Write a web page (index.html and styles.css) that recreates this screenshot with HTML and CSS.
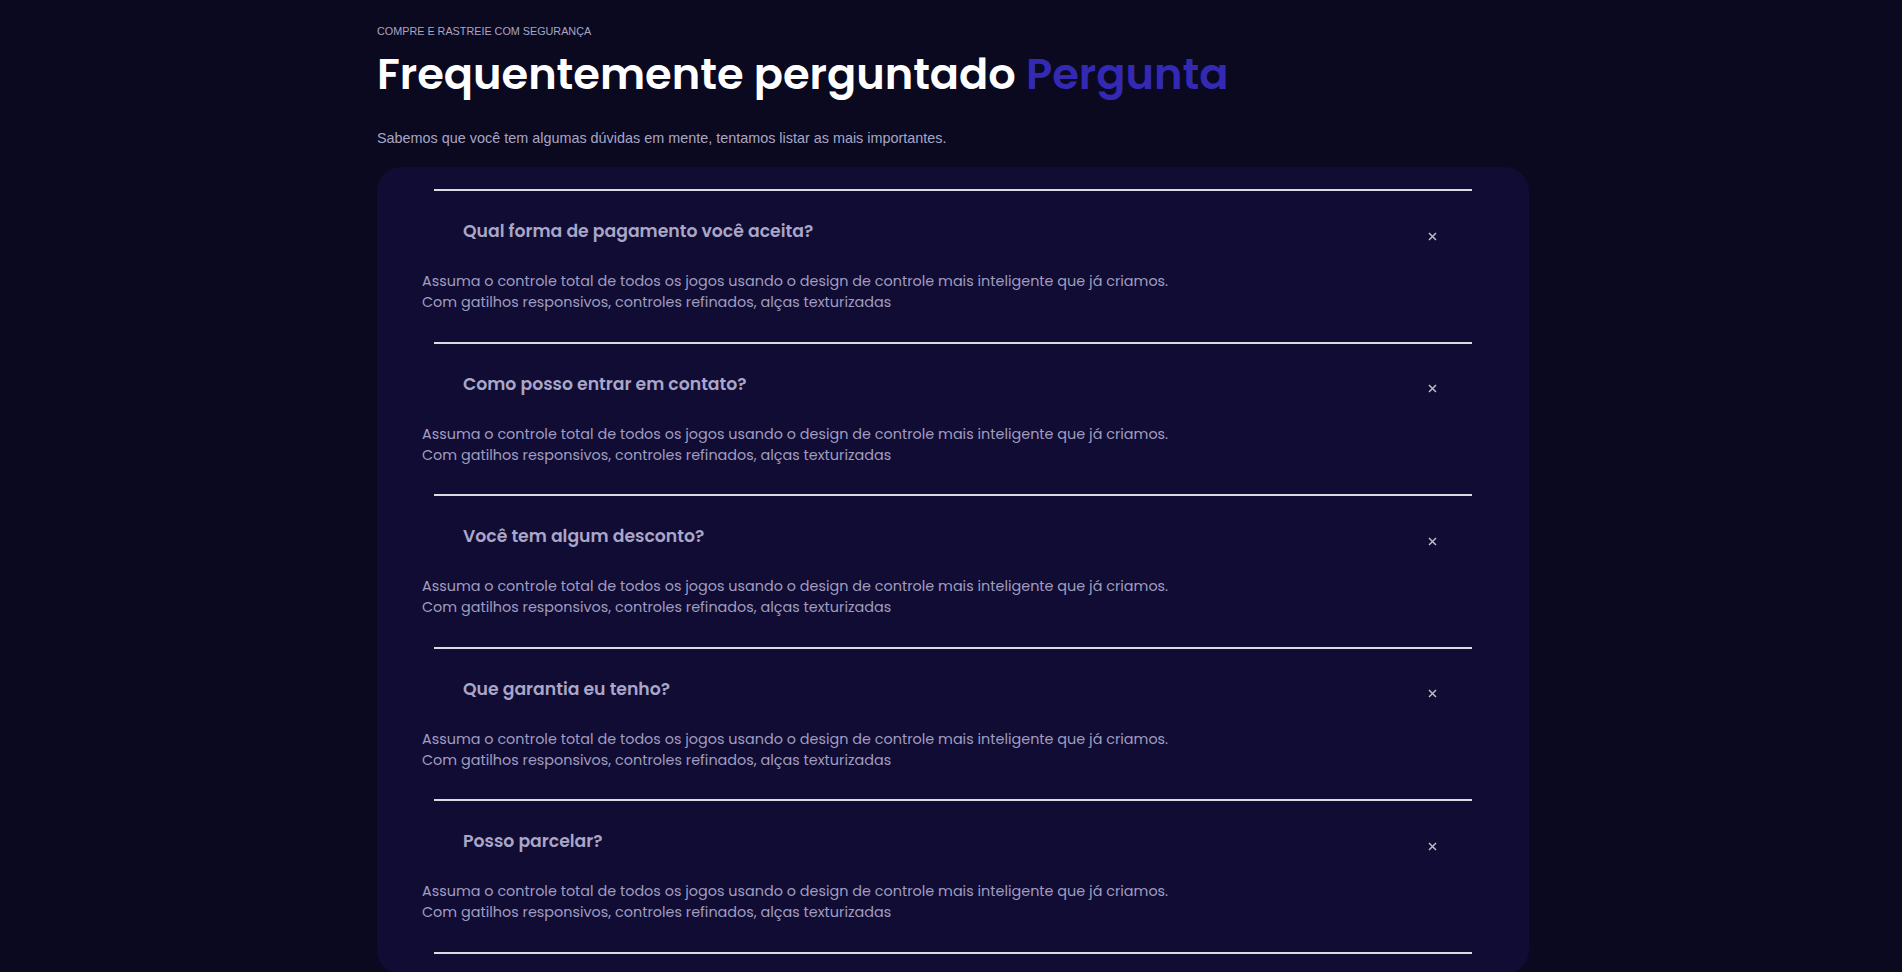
FILE: index.html
```html
<!DOCTYPE html>
<html lang="pt-BR">
<head>
<meta charset="utf-8">
<title>FAQ</title>
<link rel="stylesheet" href="styles.css">
</head>
<body>
<main class="page">
  <p class="eyebrow">COMPRE E RASTREIE COM SEGURANÇA</p>
  <h1 class="title">Frequentemente perguntado <span class="accent">Pergunta</span></h1>
  <p class="lead">Sabemos que você tem algumas dúvidas em mente, tentamos listar as mais importantes.</p>
  <section class="card">
    <div class="item">
      <div class="q-row"><h3 class="question">Qual forma de pagamento você aceita?</h3><svg class="close" width="9" height="9" viewBox="0 0 9 9"><path d="M1 1L8 8M8 1L1 8" stroke="#bdbcc6" stroke-width="1.5" fill="none"/></svg></div>
      <p class="answer">Assuma o controle total de todos os jogos usando o design de controle mais inteligente que já criamos.<br>Com gatilhos responsivos, controles refinados, alças texturizadas</p>
    </div>
    <div class="item">
      <div class="q-row"><h3 class="question">Como posso entrar em contato?</h3><svg class="close" width="9" height="9" viewBox="0 0 9 9"><path d="M1 1L8 8M8 1L1 8" stroke="#bdbcc6" stroke-width="1.5" fill="none"/></svg></div>
      <p class="answer">Assuma o controle total de todos os jogos usando o design de controle mais inteligente que já criamos.<br>Com gatilhos responsivos, controles refinados, alças texturizadas</p>
    </div>
    <div class="item">
      <div class="q-row"><h3 class="question">Você tem algum desconto?</h3><svg class="close" width="9" height="9" viewBox="0 0 9 9"><path d="M1 1L8 8M8 1L1 8" stroke="#bdbcc6" stroke-width="1.5" fill="none"/></svg></div>
      <p class="answer">Assuma o controle total de todos os jogos usando o design de controle mais inteligente que já criamos.<br>Com gatilhos responsivos, controles refinados, alças texturizadas</p>
    </div>
    <div class="item">
      <div class="q-row"><h3 class="question">Que garantia eu tenho?</h3><svg class="close" width="9" height="9" viewBox="0 0 9 9"><path d="M1 1L8 8M8 1L1 8" stroke="#bdbcc6" stroke-width="1.5" fill="none"/></svg></div>
      <p class="answer">Assuma o controle total de todos os jogos usando o design de controle mais inteligente que já criamos.<br>Com gatilhos responsivos, controles refinados, alças texturizadas</p>
    </div>
    <div class="item">
      <div class="q-row"><h3 class="question">Posso parcelar?</h3><svg class="close" width="9" height="9" viewBox="0 0 9 9"><path d="M1 1L8 8M8 1L1 8" stroke="#bdbcc6" stroke-width="1.5" fill="none"/></svg></div>
      <p class="answer">Assuma o controle total de todos os jogos usando o design de controle mais inteligente que já criamos.<br>Com gatilhos responsivos, controles refinados, alças texturizadas</p>
    </div>
  </section>
</main>
</body>
</html>
```
FILE: styles.css
```css
html, body {
  margin: 0;
  padding: 0;
  background: #0a0920;
}
body {
  padding-left: 4px;
}
.page {
  width: 1152px;
  margin: 0 auto;
  padding-top: 25px;
}
.eyebrow {
  margin: 0;
  font-family: "Liberation Sans", Arial, sans-serif;
  font-size: 10.8px;
  line-height: 13px;
  color: #a9a6c4;
}
.title {
  margin: 10px 0 0;
  font-family: "Poppins", "Open Sans", sans-serif;
  font-weight: 600;
  font-size: 43.1px;
  line-height: 53px;
  color: #ffffff;
}
.accent {
  color: #3429b3;
}
.lead {
  margin: 29px 0 0;
  font-family: "Liberation Sans", Arial, sans-serif;
  font-size: 14.4px;
  line-height: 17px;
  color: #a9a6c4;
}
.card {
  margin-top: 20px;
  background: #100c33;
  border-radius: 24px;
  padding: 22px 57px 20px;
}
.item {
  border-top: 2px solid #dcdbe2;
  padding-bottom: 28.5px;
}
.item:last-child {
  border-bottom: 2px solid #dcdbe2;
}
.q-row {
  display: flex;
  align-items: center;
  justify-content: space-between;
  padding: 27px 35px 0 29px;
}
.question {
  margin: 0;
  font-family: "Poppins", "Open Sans", sans-serif;
  font-weight: 600;
  font-size: 17.25px;
  line-height: 26px;
  color: #a9a6c8;
}
.close {
  display: block;
  margin-top: 10px;
}
.answer {
  margin: 27px 0 0 -12px;
  font-family: "Poppins", "Open Sans", sans-serif;
  font-size: 14.4px;
  line-height: 21px;
  color: #a09dc0;
}
```
